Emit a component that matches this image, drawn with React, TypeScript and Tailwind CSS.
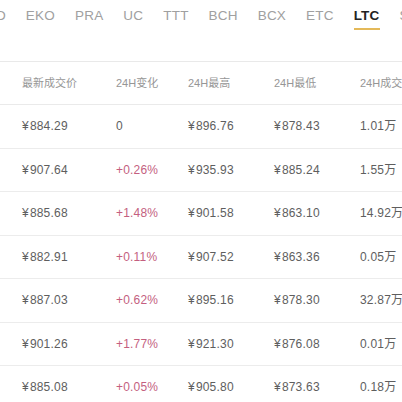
import React from "react";

const tabs = ["NEO", "EKO", "PRA", "UC", "TTT", "BCH", "BCX", "ETC", "LTC", "SC"];

const rows = [
  ["¥884.29", "0", "¥896.76", "¥878.43", "1.01万"],
  ["¥907.64", "+0.26%", "¥935.93", "¥885.24", "1.55万"],
  ["¥885.68", "+1.48%", "¥901.58", "¥863.10", "14.92万"],
  ["¥882.91", "+0.11%", "¥907.52", "¥863.36", "0.05万"],
  ["¥887.03", "+0.62%", "¥895.16", "¥878.30", "32.87万"],
  ["¥901.26", "+1.77%", "¥921.30", "¥876.08", "0.01万"],
  ["¥885.08", "+0.05%", "¥905.80", "¥873.63", "0.18万"],
];

const font = { fontFamily: '"Liberation Sans", Arial, "Noto Sans CJK SC", sans-serif' };

function Price({ v }: { v: string }) {
  if (v.startsWith("¥")) {
    return (
      <span>
        ¥<span className="ml-[1px]">{v.slice(1)}</span>
      </span>
    );
  }
  return <span>{v}</span>;
}

export default function App() {
  return (
    <div className="w-[402px] h-[402px] overflow-hidden bg-white" style={font}>
      <div className="h-[62px] border-b border-[#e9e9e9] overflow-hidden">
        <div className="flex gap-[20px] ml-[-24px] pt-[8px] whitespace-nowrap">
          {tabs.map((t) => (
            <div key={t} className="flex flex-col items-center shrink-0">
              <span
                className={
                  t === "LTC"
                    ? "text-[13.5px] leading-[16px] tracking-[0.2px] font-bold text-[#222]"
                    : "text-[13.5px] leading-[16px] tracking-[0.2px] text-[#a0a0a0]"
                }
              >
                {t}
              </span>
              {t === "LTC" && <div className="mt-[4px] h-[2px] w-full bg-[#e4b959]" />}
            </div>
          ))}
        </div>
      </div>
      <div className="grid grid-cols-[116px_72px_86px_86px_1fr] h-[43px] items-center border-b border-[#eaeaea] text-[11px] text-[#969696]">
        <div className="pl-[22px]">最新成交价</div>
        <div>24H变化</div>
        <div>24H最高</div>
        <div>24H最低</div>
        <div className="whitespace-nowrap">24H成交量</div>
      </div>
      {rows.map((r, i) => (
        <div
          key={i}
          className="grid grid-cols-[116px_72px_86px_86px_1fr] h-[43.5px] items-center border-b border-[#ececec] text-[12px] tracking-[0.2px] text-[#5e5e5e]"
        >
          <div className="pl-[22px]"><Price v={r[0]} /></div>
          <div className={r[1] === "0" ? "text-[#5e5e5e]" : "text-[#c45f7f]"}>{r[1]}</div>
          <div><Price v={r[2]} /></div>
          <div><Price v={r[3]} /></div>
          <div className="whitespace-nowrap">{r[4]}</div>
        </div>
      ))}
    </div>
  );
}
